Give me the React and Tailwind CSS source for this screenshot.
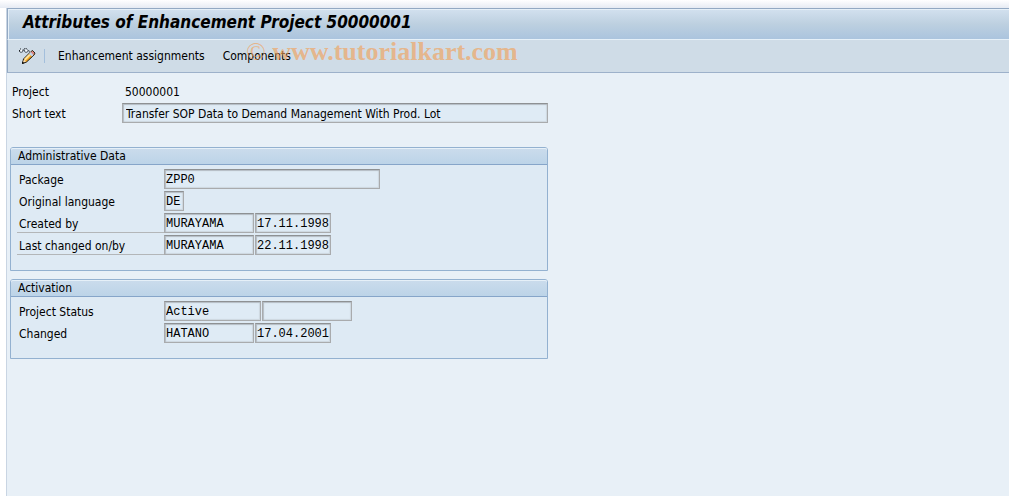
import { useId } from "react";

function Field({ label, value, width, mono = true }) {
  return (
    <input
      type="text"
      readOnly
      aria-label={label}
      defaultValue={value}
      className={`h-5 min-w-0 rounded-none border border-[#a9abad] border-t-[#8e9193] bg-[#dfebf5] pt-px text-black outline-none shadow-[inset_1px_1px_1px_#b4bcc4,inset_-1px_-1px_1px_#ced7df] ${
        mono ? "pl-px font-['Liberation_Mono',monospace] text-[12px]" : "pl-[3px] text-[12px]"
      } ${width}`}
    />
  );
}

function Row({ label, underline, fields }) {
  return (
    <div className="flex h-[22px] items-start pr-2">
      <div className={`h-5 w-[147px] shrink-0 pl-0.5 leading-[22px] ${underline ? "border-b border-[#b3b6b8]" : ""}`}>
        {label}
      </div>
      <div className="flex min-w-0 gap-px">
        {fields.map((field, idx) => (
          <Field key={idx} label={`${label} ${idx + 1}`} {...field} />
        ))}
      </div>
    </div>
  );
}

function Group({ title, children }) {
  const id = useId();

  return (
    <section aria-labelledby={id} className="rounded-t-[3px] border border-[#93b1d0] bg-[#deeaf4]">
      <h2
        id={id}
        className="h-[17px] rounded-t-[2px] border-b border-[#86a5c9] bg-linear-to-b from-[#cbdcec] to-[#bcd4e8] pl-[7px] leading-4 shadow-[inset_0_1px_0_#e6f0f8]"
      >
        {title}
      </h2>
      <div className="pt-1 pb-[13px] pl-1.5">{children}</div>
    </section>
  );
}

function ChangeIcon() {
  return (
    <svg width="18" height="18" viewBox="0 0 18 18" aria-hidden="true">
      {/* glasses */}
      <path
        d="M1.5 4.500V3L3 1.500M1.500 4.500L3 5.500L5 4.500V2.500L6.500 3.500V4.500L8 5.500L10 4.500V3.500L12 4.500M6 2L8 1.500L9.500 2.500"
        fill="none"
        stroke="#1d2228"
        strokeWidth="1"
        strokeDasharray="1.500 0.700"
      />
      <path d="M2.500 3.500H4M7.500 3.500H9" stroke="#fff" strokeWidth="1.500" />
      {/* pencil */}
      <path d="M4.500 16.500L5.500 12L12.500 5L14.500 3.500L17 6L16 8L8.500 15Z" fill="#f3a21b" stroke="#171717" />
      <path d="M6 12L11 7L12.500 8.500L7.500 13.500Z" fill="#ffe39a" />
      <path d="M12.500 5.500L14.500 4L16.500 6L15 8Z" fill="#d98486" />
      <path d="M11 7L12.500 5L15.500 8L14 9.500Z" fill="#c3d4ee" />
      <path d="M5 15.500L6 12.500L8 14.500Z" fill="#f6dfbd" />
      <path d="M4 17V14.500L6.500 16Z" fill="#111" />
    </svg>
  );
}

const adminRows = [
  { label: "Package", fields: [{ value: "ZPP0", width: "w-[216px]" }] },
  { label: "Original language", fields: [{ value: "DE", width: "w-5" }] },
  {
    label: "Created by",
    underline: true,
    fields: [
      { value: "MURAYAMA", width: "w-[90px]" },
      { value: "17.11.1998", width: "w-[76px]" },
    ],
  },
  {
    label: "Last changed on/by",
    underline: true,
    fields: [
      { value: "MURAYAMA", width: "w-[90px]" },
      { value: "22.11.1998", width: "w-[76px]" },
    ],
  },
];

const activationRows = [
  {
    label: "Project Status",
    fields: [
      { value: "Active", width: "w-[97px]" },
      { value: "", width: "w-[90px]" },
    ],
  },
  {
    label: "Changed",
    fields: [
      { value: "HATANO", width: "w-[90px]" },
      { value: "17.04.2001", width: "w-[76px]" },
    ],
  },
];

export default function App() {
  return (
    <div className="flex min-h-screen flex-col bg-white font-['DejaVu_Sans_Condensed','DejaVu_Sans',sans-serif] text-[12px] text-black">
      <div className="h-2 bg-linear-to-b from-white to-[#e6ebf3]" />
      <div className="ml-1.5 flex-1 border-l border-[#c9d5e3] bg-[#e8f0f7]">
        {/* Title bar */}
        <header className="h-8 border-y border-t-[#93a9c3] border-b-[#e6f0f8] border-l border-l-[#93a9c3] bg-linear-to-b from-[#d3e1ef] via-[#bdd0e0] to-[#abc4de] pl-[15px] shadow-[inset_1px_1px_0_#e6f0f8]">
          <h1 className="text-[17px] leading-[27px] font-bold italic">
            Attributes of Enhancement Project 50000001
          </h1>
        </header>

        {/* Toolbar */}
        <div className="relative flex h-[33px] items-center border-b border-l border-b-[#9db1ca] border-l-[#93a9c3] bg-[#cfdce7] pl-2.5">
          <button type="button" aria-label="Display / Change">
            <ChangeIcon />
          </button>
          <div className="mr-[13px] ml-2 h-3.5 w-px bg-[#a3bfdc]" />
          <button type="button" className="mr-[18px]">Enhancement assignments</button>
          <button type="button">Components</button>
          <div className="pointer-events-none absolute top-0 left-[238px] font-['Liberation_Serif',serif] text-[26px] leading-6 whitespace-nowrap text-[#f2a057]/65">
            © <span className="font-bold">www.tutorialkart.com</span>
          </div>
        </div>

        <main className="max-w-[541px] pt-2 pl-[3px]">
          <div className="flex h-[22px] items-center pl-0.5">
            <div className="w-[113px] shrink-0">Project</div>
            <output>50000001</output>
          </div>
          <div className="mb-6 flex h-5 pl-0.5">
            <div className="w-[110px] shrink-0 leading-[22px]">Short text</div>
            <Field
              label="Short text"
              value="Transfer SOP Data to Demand Management With Prod. Lot"
              width="flex-1"
              mono={false}
            />
          </div>

          <div className="flex flex-col gap-2">
            <Group title="Administrative Data">
              {adminRows.map((row) => (
                <Row key={row.label} {...row} />
              ))}
            </Group>
            <Group title="Activation">
              {activationRows.map((row) => (
                <Row key={row.label} {...row} />
              ))}
            </Group>
          </div>
        </main>
      </div>
    </div>
  );
}
